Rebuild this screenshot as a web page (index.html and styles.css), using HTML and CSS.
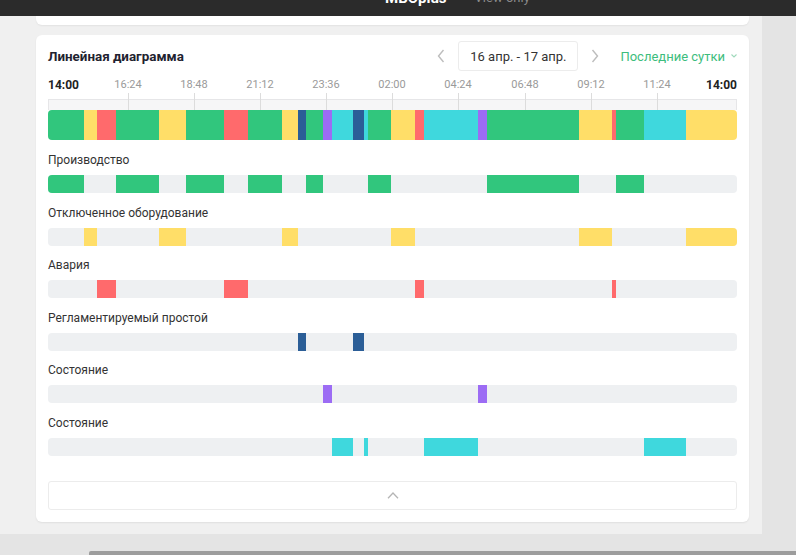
FILE: index.html
```html
<!DOCTYPE html>
<html lang="ru">
<head>
<meta charset="utf-8">
<title>Линейная диаграмма</title>
<link rel="stylesheet" href="styles.css">
</head>
<body>
<div class="topbar">
  <span class="brand">MBOplus</span>
  <span class="mode">View only</span>
</div>
<div class="page">
  <div class="prev-card"></div>
  <div class="card">
    <div class="card-head">
      <div class="title">Линейная диаграмма</div>
      <div class="controls">
        <span class="nav-btn"><svg width="8" height="14" viewBox="0 0 8 14"><path d="M6.5 1 L1.5 7 L6.5 13" fill="none" stroke="#bdbdbd" stroke-width="1.4"/></svg></span>
        <div class="date-box">16 апр. - 17 апр.</div>
        <span class="nav-btn"><svg width="8" height="14" viewBox="0 0 8 14"><path d="M1.5 1 L6.5 7 L1.5 13" fill="none" stroke="#bdbdbd" stroke-width="1.4"/></svg></span>
        <div class="range">
          <span>Последние сутки</span>
          <svg width="6" height="4" viewBox="0 0 6 4"><path d="M0.5 0.5 L3 3 L5.5 0.5" fill="none" stroke="#9fd9bb" stroke-width="1.1"/></svg>
        </div>
      </div>
    </div>

    <div class="axis">
      <div class="strip"></div>
      <span class="tick" style="left:80px"></span>
      <span class="tick" style="left:146px"></span>
      <span class="tick" style="left:212px"></span>
      <span class="tick" style="left:278px"></span>
      <span class="tick" style="left:344px"></span>
      <span class="tick" style="left:410px"></span>
      <span class="tick" style="left:477px"></span>
      <span class="tick" style="left:543px"></span>
      <span class="tick" style="left:609px"></span>
      <span class="lbl lbl-start">14:00</span>
      <span class="lbl" style="left:80px">16:24</span>
      <span class="lbl" style="left:146px">18:48</span>
      <span class="lbl" style="left:212px">21:12</span>
      <span class="lbl" style="left:278px">23:36</span>
      <span class="lbl" style="left:344px">02:00</span>
      <span class="lbl" style="left:410px">04:24</span>
      <span class="lbl" style="left:477px">06:48</span>
      <span class="lbl" style="left:543px">09:12</span>
      <span class="lbl" style="left:609px">11:24</span>
      <span class="lbl lbl-end">14:00</span>
    </div>

    <div class="mainbar">
      <span class="g" style="width:36px"></span>
      <span class="y" style="width:13px"></span>
      <span class="r" style="width:19px"></span>
      <span class="g" style="width:43px"></span>
      <span class="y" style="width:27px"></span>
      <span class="g" style="width:38px"></span>
      <span class="r" style="width:24px"></span>
      <span class="g" style="width:34px"></span>
      <span class="y" style="width:16px"></span>
      <span class="n" style="width:8px"></span>
      <span class="g" style="width:17px"></span>
      <span class="p" style="width:9px"></span>
      <span class="c" style="width:21px"></span>
      <span class="n" style="width:11px"></span>
      <span class="c" style="width:4px"></span>
      <span class="g" style="width:23px"></span>
      <span class="y" style="width:24px"></span>
      <span class="r" style="width:9px"></span>
      <span class="c" style="width:54px"></span>
      <span class="p" style="width:9px"></span>
      <span class="g" style="width:92px"></span>
      <span class="y" style="width:33px"></span>
      <span class="r" style="width:4px"></span>
      <span class="g" style="width:28px"></span>
      <span class="c" style="width:42px"></span>
      <span class="y" style="width:51px"></span>
    </div>

    <div class="rows">
      <div class="row">
        <div class="row-label">Производство</div>
        <div class="track">
          <span class="seg g" style="left:0px;width:36px"></span>
          <span class="seg g" style="left:68px;width:43px"></span>
          <span class="seg g" style="left:138px;width:38px"></span>
          <span class="seg g" style="left:200px;width:34px"></span>
          <span class="seg g" style="left:258px;width:17px"></span>
          <span class="seg g" style="left:320px;width:23px"></span>
          <span class="seg g" style="left:439px;width:92px"></span>
          <span class="seg g" style="left:568px;width:28px"></span>
        </div>
      </div>
      <div class="row">
        <div class="row-label">Отключенное оборудование</div>
        <div class="track">
          <span class="seg y" style="left:36px;width:13px"></span>
          <span class="seg y" style="left:111px;width:27px"></span>
          <span class="seg y" style="left:234px;width:16px"></span>
          <span class="seg y" style="left:343px;width:24px"></span>
          <span class="seg y" style="left:531px;width:33px"></span>
          <span class="seg y" style="left:638px;width:51px"></span>
        </div>
      </div>
      <div class="row">
        <div class="row-label">Авария</div>
        <div class="track">
          <span class="seg r" style="left:49px;width:19px"></span>
          <span class="seg r" style="left:176px;width:24px"></span>
          <span class="seg r" style="left:367px;width:9px"></span>
          <span class="seg r" style="left:564px;width:4px"></span>
        </div>
      </div>
      <div class="row">
        <div class="row-label">Регламентируемый простой</div>
        <div class="track">
          <span class="seg n" style="left:250px;width:8px"></span>
          <span class="seg n" style="left:305px;width:11px"></span>
        </div>
      </div>
      <div class="row">
        <div class="row-label">Состояние</div>
        <div class="track">
          <span class="seg p" style="left:275px;width:9px"></span>
          <span class="seg p" style="left:430px;width:9px"></span>
        </div>
      </div>
      <div class="row">
        <div class="row-label">Состояние</div>
        <div class="track">
          <span class="seg c" style="left:284px;width:21px"></span>
          <span class="seg c" style="left:316px;width:4px"></span>
          <span class="seg c" style="left:376px;width:54px"></span>
          <span class="seg c" style="left:596px;width:42px"></span>
        </div>
      </div>
    </div>

    <div class="collapse">
      <svg width="12" height="7" viewBox="0 0 12 7"><path d="M1 6.2 L6 1 L11 6.2" fill="none" stroke="#b5b5b5" stroke-width="1.3"/></svg>
    </div>
  </div>
</div>
<div class="hscroll"></div>
</body>
</html>
```

FILE: styles.css
```css
* { box-sizing: border-box; }

body {
  margin: 0;
  height: 555px;
  overflow: hidden;
  background: #e4e4e4;
  font-family: Roboto, "Noto Sans", "Liberation Sans", sans-serif;
  color: #333;
}

.topbar {
  height: 16px;
  background: #2b2b2b;
  display: flex;
  align-items: flex-end;
  gap: 28px;
  padding-left: 385px;
  overflow: hidden;
}
.brand {
  color: #fff;
  font-weight: 700;
  font-size: 15px;
  line-height: 20px;
  margin-bottom: 8px;
}
.mode {
  color: #8a8a8a;
  font-size: 13px;
  line-height: 20px;
  margin-bottom: 8px;
}

.page {
  width: 762px;
  background: #f0f0f0;
  padding: 0 13px 12px 36px;
}

.prev-card {
  height: 9px;
  background: #fff;
  border-radius: 0 0 6px 6px;
  box-shadow: 0 1px 2px rgba(0, 0, 0, 0.06);
  margin-bottom: 10px;
}

.card {
  background: #fff;
  border-radius: 6px;
  padding: 0 12px 12px;
  box-shadow: 0 1px 2px rgba(0, 0, 0, 0.07);
}

.card-head {
  height: 42px;
  display: flex;
  align-items: center;
  justify-content: space-between;
}
.title {
  font-size: 13.4px;
  font-weight: 700;
  color: #1f2330;
}
.controls {
  display: flex;
  align-items: center;
}
.nav-btn {
  width: 20px;
  height: 30px;
  display: flex;
  align-items: center;
  justify-content: center;
}
.nav-btn:first-child { margin-right: 7px; }
.date-box {
  width: 120px;
  height: 30px;
  border: 1px solid #ececec;
  border-radius: 3px;
  display: flex;
  align-items: center;
  justify-content: center;
  font-size: 13px;
  color: #333;
  margin-right: 7px;
}
.range {
  display: flex;
  align-items: center;
  gap: 6px;
  margin-left: 15px;
  padding-right: 0;
  color: #3dbd7d;
  font-size: 13px;
}

.axis {
  position: relative;
  height: 33px;
}
.strip {
  position: absolute;
  left: 0;
  right: 0;
  top: 22px;
  bottom: 0;
  background: #f6f6f7;
  border: 1px solid #e6e6e8;
  border-bottom: none;
}
.tick {
  position: absolute;
  top: 16px;
  bottom: 0;
  width: 1px;
  background: #dcdcdc;
}
.lbl {
  position: absolute;
  top: 0;
  line-height: 16px;
  font-size: 11px;
  color: #9a9a9a;
  transform: translateX(-50%);
}
.lbl-start, .lbl-end {
  font-size: 12px;
  font-weight: 700;
  color: #222;
  transform: none;
}
.lbl-start { left: 0; }
.lbl-end { right: 0; }

.mainbar {
  display: flex;
  height: 30px;
  border-radius: 4px;
  overflow: hidden;
}
.mainbar span { flex: none; height: 100%; }

.g { background: #31c67d; }
.y { background: #ffde68; }
.r { background: #ff6a6c; }
.n { background: #2b5e97; }
.p { background: #9c6cf4; }
.c { background: #3fd8dd; }

.rows {
  margin-top: 12px;
  display: flex;
  flex-direction: column;
  gap: 11.6px;
}
.row-label {
  font-size: 12px;
  line-height: 16px;
  color: #333;
}
.track {
  position: relative;
  margin-top: 7px;
  height: 18px;
  background: #eef0f2;
  border-radius: 4px;
  overflow: hidden;
}
.seg {
  position: absolute;
  top: 0;
  bottom: 0;
}

.collapse {
  margin-top: 25px;
  height: 29px;
  border: 1px solid #ececec;
  border-radius: 3px;
  display: flex;
  align-items: center;
  justify-content: center;
}

.hscroll {
  margin-top: 17px;
  margin-left: 89px;
  height: 4px;
  background: #9d9d9d;
  border-radius: 2px 0 0 0;
}
```
